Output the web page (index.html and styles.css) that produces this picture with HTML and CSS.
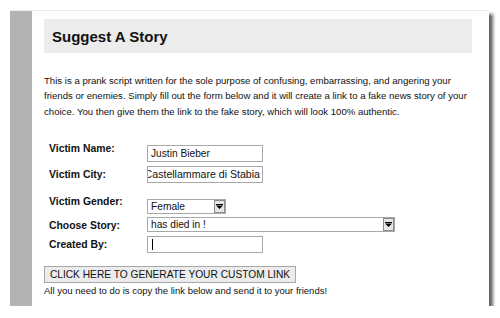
FILE: index.html
```html
<!DOCTYPE html>
<html>
<head>
<meta charset="utf-8">
<link rel="stylesheet" href="styles.css">
</head>
<body>
<div class="frame">
  <div class="strip"></div>
  <div class="content">
    <div class="header"><h1 class="title">Suggest A Story</h1></div>
    <p class="intro">This is a prank script written for the sole purpose of confusing, embarrassing, and angering your friends or enemies. Simply fill out the form below and it will create a link to a fake news story of your choice. You then give them the link to the fake story, which will look 100% authentic.</p>
    <form class="form">
      <div class="row row-name">
        <label class="label lbl-name">Victim Name:</label>
        <div class="field"><span class="val">Justin Bieber</span></div>
      </div>
      <div class="row row-city">
        <label class="label lbl-city">Victim City:</label>
        <div class="field field-end"><span class="val val-city">Castellammare di Stabia</span></div>
      </div>
      <div class="row row-gender">
        <label class="label lbl-gender">Victim Gender:</label>
        <div class="select sel-gender"><span class="val">Female</span><span class="arrow"><svg width="7" height="5" viewBox="0 0 7 5"><rect x="0" y="0" width="7" height="1" fill="#000"/><polygon points="0,1.5 7,1.5 3.5,5" fill="#000"/></svg></span></div>
      </div>
      <div class="row row-story">
        <label class="label lbl-story">Choose Story:</label>
        <div class="select sel-story"><span class="val">has died in !</span><span class="arrow"><svg width="7" height="5" viewBox="0 0 7 5"><rect x="0" y="0" width="7" height="1" fill="#000"/><polygon points="0,1.5 7,1.5 3.5,5" fill="#000"/></svg></span></div>
      </div>
      <div class="row row-created">
        <label class="label lbl-created">Created By:</label>
        <div class="field"><span class="caret"></span></div>
      </div>
      <button type="button" class="btn">CLICK HERE TO GENERATE YOUR CUSTOM LINK</button>
      <p class="note">All you need to do is copy the link below and send it to your friends!</p>
    </form>
  </div>
</div>
</body>
</html>
```
FILE: styles.css
```css
html, body { margin: 0; padding: 0; background: #fff; }
body { padding: 10px 0 0 10px; font-family: "Liberation Sans", Arial, sans-serif; color: #111; }
.frame {
  width: 479px;
  height: 296px;
  display: flex;
  background: #fff;
  box-shadow: 4px 4px 3px rgba(0,0,0,0.6);
  border-top: 1px solid #ececec;
  box-sizing: border-box;
}
.strip { width: 22px; background: #b3b3b3; flex: none; }
.content { flex: 1; padding: 8px 17px 0 12px; }
.header {
  height: 34px;
  background: #ececec;
  display: flex;
  align-items: center;
  padding-left: 8px;
  padding-top: 1px;
  box-sizing: border-box;
}
.title { margin: 0; font-size: 15px; font-weight: bold; color: #111; }
.intro {
  margin: 20px 0 0 0;
  font-size: 9.6px;
  line-height: 15.3px;
  color: #111;
}
.form { margin: 0; padding: 26px 0 0 5px; display: flex; flex-direction: column; align-items: flex-start; }
.row { display: flex; align-items: flex-start; }
.label { width: 98px; flex: none; font-size: 10.4px; font-weight: bold; line-height: 12px; }
.row-city { margin-top: 4px; }
.row-gender { margin-top: 16px; }
.row-story { margin-top: 3px; }
.row-created { margin-top: 4px; }
.lbl-name { margin-top: -2px; }
.lbl-city { margin-top: 3px; }
.lbl-gender { margin-top: -3px; }
.lbl-story { margin-top: 3px; }
.lbl-created { margin-top: 3px; }
.field {
  width: 116px;
  height: 17px;
  box-sizing: border-box;
  border: 1px solid #a8a8a8;
  background: #fff;
  display: flex;
  align-items: center;
  padding-left: 3px;
  overflow: hidden;
  white-space: nowrap;
  font-size: 10.2px;
}
.field-end { justify-content: flex-end; padding-left: 0; padding-right: 2px; }
.val-city { font-size: 10.6px; flex: none; }
.caret { width: 1px; height: 11px; background: #000; margin-left: 1px; }
.select {
  height: 15px;
  box-sizing: border-box;
  border: 1px solid #a8a8a8;
  background: #fff;
  display: flex;
  align-items: center;
  justify-content: space-between;
  padding-left: 3px;
  font-size: 10.2px;
  white-space: nowrap;
}
.sel-gender { width: 79px; }
.sel-story { width: 248px; }
.arrow {
  width: 11px;
  height: 13px;
  box-sizing: border-box;
  border: 1px solid #8c8c8c;
  background: #e6e6e6;
  display: flex;
  align-items: center;
  justify-content: center;
  flex: none;
}
.btn {
  margin: 13px 0 0 -5px;
  height: 17px;
  width: 252px;
  padding: 0;
  border: 1px solid #a8a8a8;
  background: #ececec;
  font-family: "Liberation Sans", Arial, sans-serif;
  font-size: 10.2px;
  color: #111;
  line-height: 15px;
}
.note { margin: 2px 0 0 -5px; font-size: 9.5px; line-height: 12px; }
```
